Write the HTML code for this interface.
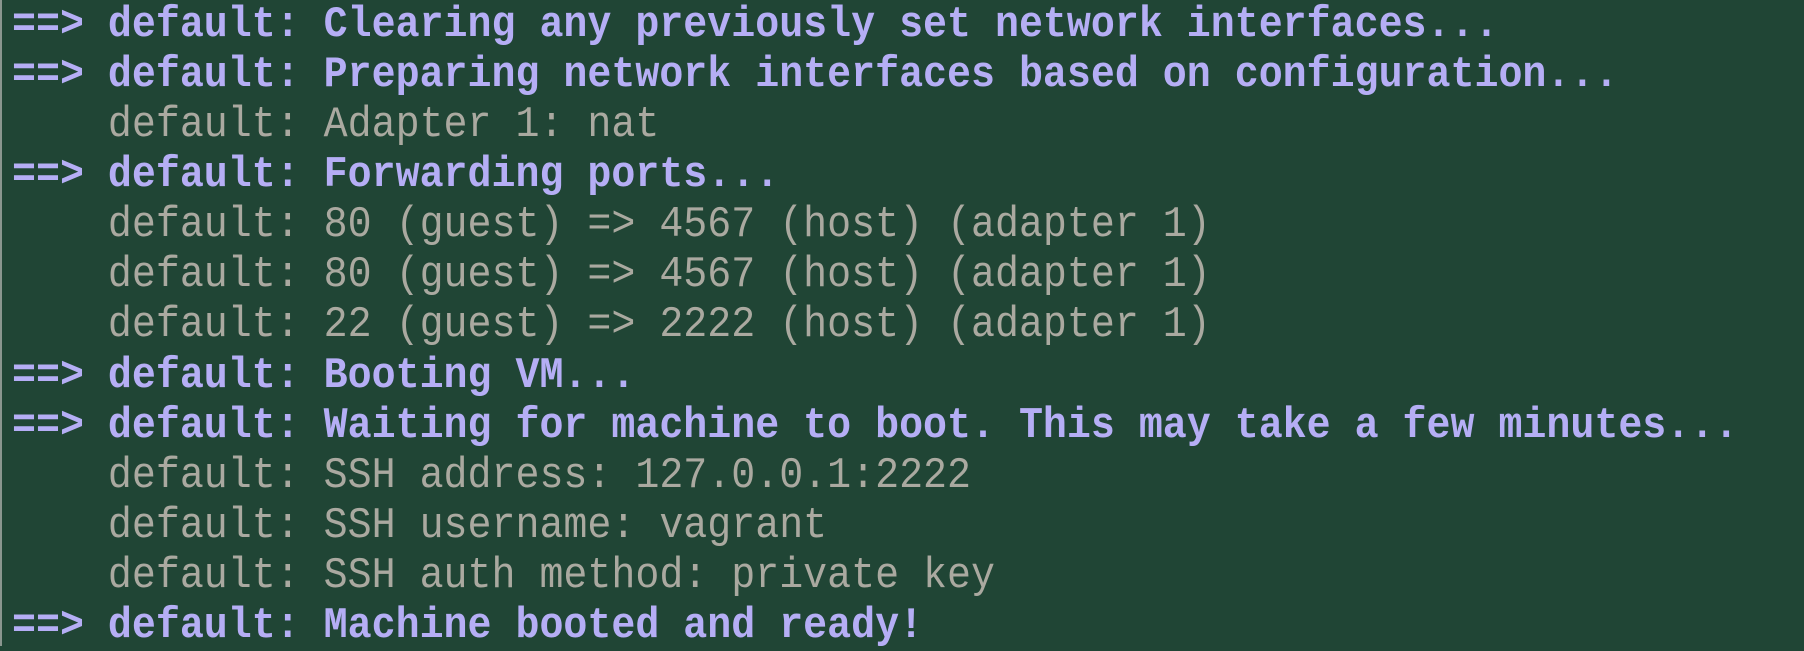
<!DOCTYPE html>
<html><head><meta charset="utf-8"><style>
html,body{margin:0;padding:0;}
body{width:1804px;height:646px;background:#204535;overflow:hidden;position:relative;border-left:2px solid #8a968f;box-sizing:border-box;}
pre{margin:0;position:absolute;left:10px;top:0px;font-family:"Liberation Mono",monospace;font-size:44px;line-height:50.08px;color:#aaa9a0;white-space:pre;transform:scaleX(0.908);transform-origin:0 0;}
b{color:#b5aef5;font-weight:bold;}
</style></head><body><pre><b>==> default: Clearing any previously set network interfaces...</b>
<b>==> default: Preparing network interfaces based on configuration...</b>
    default: Adapter 1: nat
<b>==> default: Forwarding ports...</b>
    default: 80 (guest) => 4567 (host) (adapter 1)
    default: 80 (guest) => 4567 (host) (adapter 1)
    default: 22 (guest) => 2222 (host) (adapter 1)
<b>==> default: Booting VM...</b>
<b>==> default: Waiting for machine to boot. This may take a few minutes...</b>
    default: SSH address: 127.0.0.1:2222
    default: SSH username: vagrant
    default: SSH auth method: private key
<b>==> default: Machine booted and ready!</b></pre></body></html>
